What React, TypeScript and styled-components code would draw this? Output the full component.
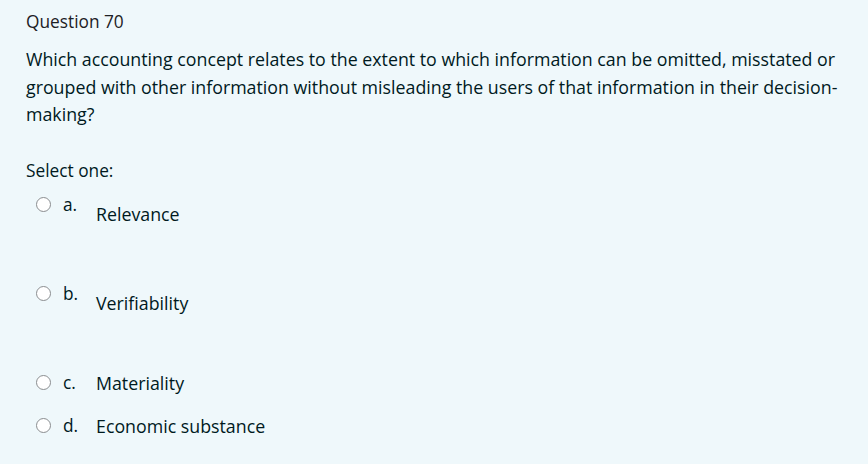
import styled, { createGlobalStyle } from 'styled-components';

const GlobalStyle = createGlobalStyle`
  html, body {
    margin: 0;
    padding: 0;
    background: #eff8fb;
  }
  body {
    font-family: 'Open Sans', 'Noto Sans', sans-serif;
    color: #001a1e;
  }
`;

const options = [
  { letter: 'a.', text: 'Relevance', paragraph: true },
  { letter: 'b.', text: 'Verifiability', paragraph: true },
  { letter: 'c.', text: 'Materiality', paragraph: false },
  { letter: 'd.', text: 'Economic substance', paragraph: false },
];

export default function App() {
  return (
    <S.Page>
      <GlobalStyle />
      <S.Title>Question 70</S.Title>
      <S.QuestionText>
        Which accounting concept relates to the extent to which information can be omitted, misstated or
        grouped with other information without misleading the users of that information in their decision-making?
      </S.QuestionText>
      <S.Prompt>Select one:</S.Prompt>
      <S.Answers>
        {options.map((o) => (
          <S.Option key={o.letter}>
            <S.Radio type="radio" name="q70" />
            <S.Letter>{o.letter}</S.Letter>
            <S.AnswerText paragraph={o.paragraph}>{o.text}</S.AnswerText>
          </S.Option>
        ))}
      </S.Answers>
    </S.Page>
  );
}

const S = {
  Page: styled.div`
    width: 868px;
    height: 464px;
    box-sizing: border-box;
    padding: 10px 26px 0 26px;
    background: #eff8fb;
  `,
  Title: styled.div`
    font-size: 17.3px;
    line-height: 24px;
    color: #1d2125;
  `,
  QuestionText: styled.div`
    margin-top: 12px;
    font-size: 17.8px;
    line-height: 27.5px;
    width: 830px;
  `,
  Prompt: styled.div`
    margin-top: 30px;
    font-size: 17.3px;
    line-height: 24px;
  `,
  Answers: styled.div`
    display: flex;
    flex-direction: column;
    margin-top: 8px;
    padding-left: 10px;
  `,
  Option: styled.label`
    display: flex;
    align-items: flex-start;
    font-size: 17.3px;
    line-height: 24px;
    padding: 2px 0 17px 0;
  `,
  Radio: styled.input`
    appearance: none;
    width: 15px;
    height: 15px;
    margin: 4px 12px 0 0;
    border: 1.5px solid #8a8d90;
    border-radius: 50%;
    background: #fff;
    box-sizing: border-box;
    flex: none;
  `,
  Letter: styled.span`
    width: 33px;
    flex: none;
  `,
  AnswerText: styled.div<{ paragraph: boolean }>`
    font-size: 17.8px;
    padding-top: ${({ paragraph }) => (paragraph ? '9px' : '0')};
    padding-bottom: ${({ paragraph }) => (paragraph ? '37px' : '0')};
  `,
};
